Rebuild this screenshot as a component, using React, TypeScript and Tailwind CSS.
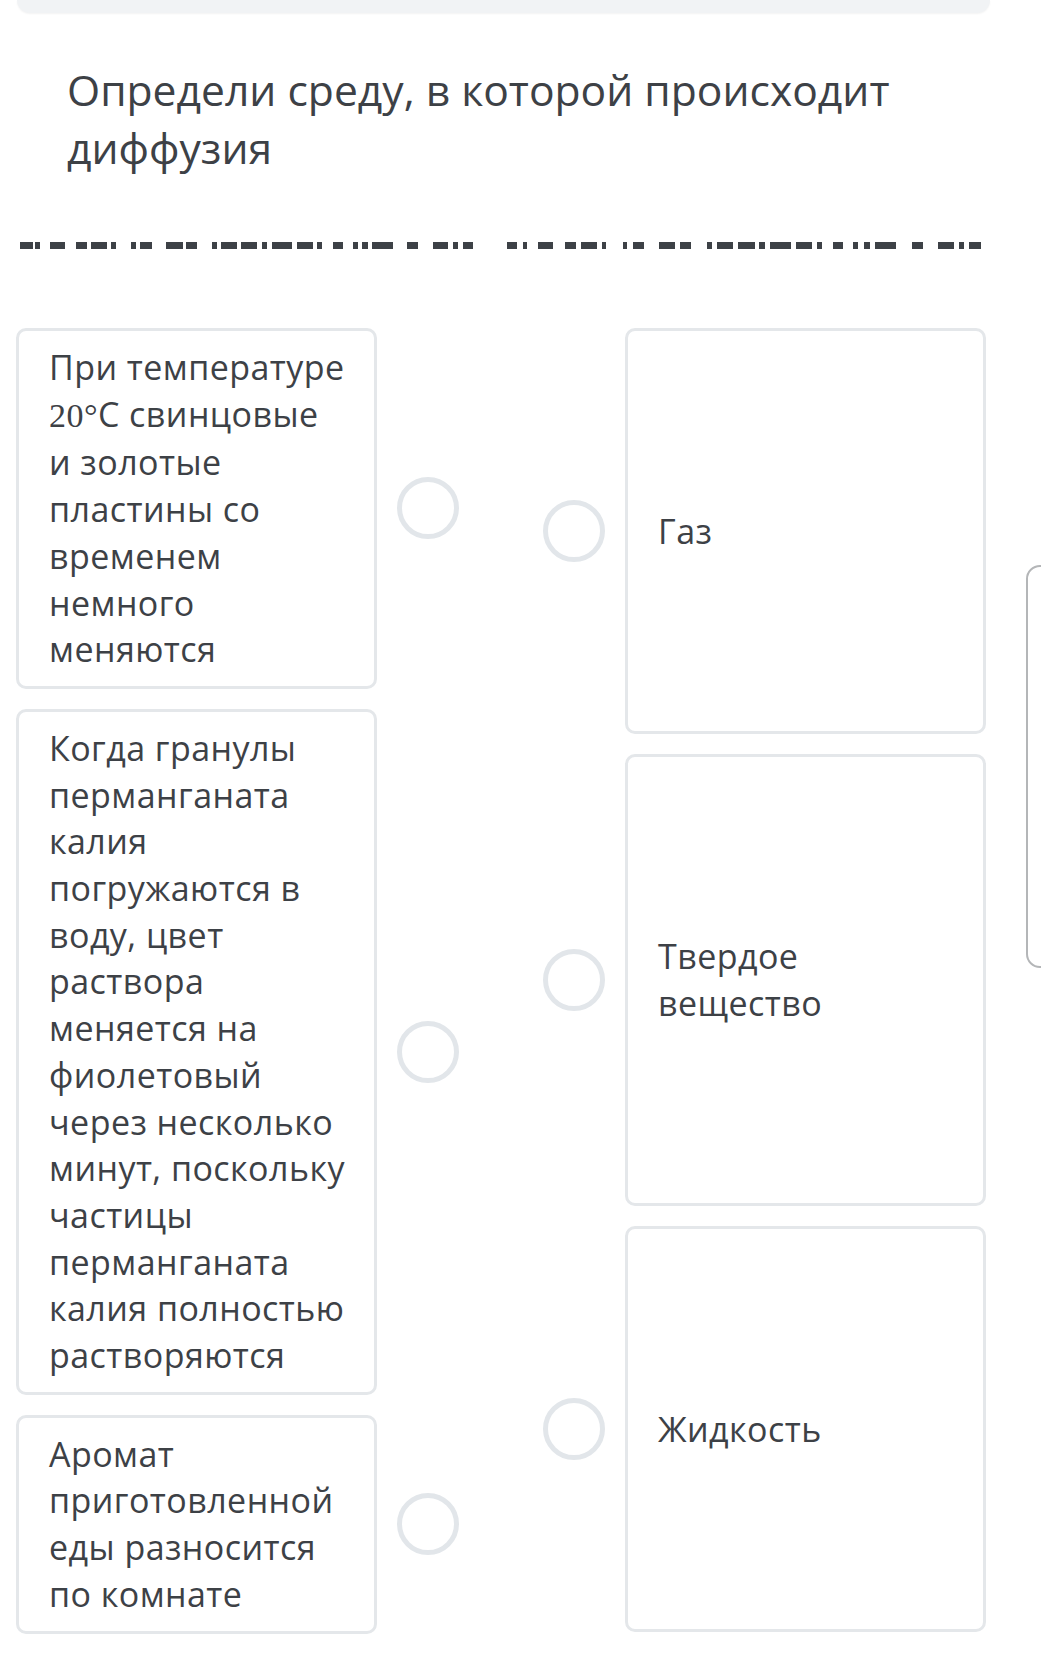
import React from 'react';

const font = { fontFamily: '"Open Sans", "Noto Sans", sans-serif' };

// underline glitch under the question: [start, end] pairs in px
const dashes: [number, number][] = [
  [20, 33], [35, 40], [50, 65], [76, 87], [91, 107], [111, 116], [131, 136], [140, 152],
  [166, 183], [186, 197], [212, 217], [221, 237], [241, 257], [262, 267], [272, 292],
  [297, 313], [317, 322], [333, 343], [353, 358], [362, 368], [372, 393], [407, 418],
  [433, 448], [453, 458], [463, 473],
  [507, 517], [523, 527], [538, 553], [565, 576], [581, 597], [602, 606], [623, 627],
  [633, 644], [659, 675], [680, 691], [707, 712], [717, 733], [738, 755], [759, 765],
  [770, 791], [796, 812], [817, 822], [833, 843], [853, 858], [864, 870], [875, 896],
  [912, 923], [938, 954], [959, 964], [969, 981],
];

const Radio = () => (
  <div className="w-[62px] h-[62px] shrink-0 rounded-full border-[5px] border-[#e2e6ea] bg-white" />
);

interface CardProps {
  lines: React.ReactNode[];
}

const LeftCard: React.FC<CardProps> = ({ lines }) => (
  <div className="w-[361px] shrink-0 rounded-[10px] border-[3px] border-[#e4e7ea] bg-white px-[30px] py-[13px] text-[34px] tracking-[0.45px] leading-[46.7px] text-[#3d4146]">
    {lines.map((l, i) => (
      <div key={i} className="whitespace-nowrap">{l}</div>
    ))}
  </div>
);

const RightCard: React.FC<CardProps & { h: string }> = ({ lines, h }) => (
  <div className={`w-[361px] shrink-0 flex flex-col justify-center rounded-[10px] border-[3px] border-[#e4e7ea] bg-white px-[30px] text-[34px] tracking-[0.45px] leading-[46.7px] text-[#3d4146] ${h}`}>
    {lines.map((l, i) => (
      <div key={i} className="whitespace-nowrap">{l}</div>
    ))}
  </div>
);

const leftItems: React.ReactNode[][] = [
  [
    'При температуре',
    <>
      <span style={{ fontFamily: '"Liberation Serif", "DejaVu Serif", serif' }}>20°</span>C свинцовые
    </>,
    'и золотые',
    'пластины со',
    'временем',
    'немного',
    'меняются',
  ],
  [
    'Когда гранулы',
    'перманганата',
    'калия',
    'погружаются в',
    'воду, цвет',
    'раствора',
    'меняется на',
    'фиолетовый',
    'через несколько',
    'минут, поскольку',
    'частицы',
    'перманганата',
    'калия полностью',
    'растворяются',
  ],
  ['Аромат', 'приготовленной', 'еды разносится', 'по комнате'],
];

export default function App() {
  return (
    <div className="relative w-[1041px] min-h-[1669px] bg-white overflow-hidden" style={font}>
      <div className="ml-[17px] w-[973px] h-[13px] rounded-b-[14px] bg-[#f1f3f5] shadow-[0_1px_2px_rgba(0,0,0,0.05)]" />

      <h1 className="mt-[47px] ml-[67px] w-[880px] text-[42.6px] leading-[58px] font-normal text-[#3d4146]">
        Определи среду, в которой происходит диффузия
      </h1>

      <svg className="block mt-[66px]" width="1041" height="7" viewBox="0 0 1041 7">
        {dashes.map(([a, b]) => (
          <rect key={a} x={a} y={0} width={b - a} height={7} fill="#3d4146" />
        ))}
      </svg>

      <div className="mt-[79px] ml-[16px] flex gap-[84px]">
        <div className="flex flex-col gap-[20px]">
          {leftItems.map((lines, i) => (
            <div key={i} className="flex items-center gap-[20px]">
              <LeftCard lines={lines} />
              <Radio />
            </div>
          ))}
        </div>
        <div className="flex flex-col gap-[20px]">
          <div className="flex items-center gap-[20px]">
            <Radio />
            <RightCard lines={['Газ']} h="h-[406px]" />
          </div>
          <div className="flex items-center gap-[20px]">
            <Radio />
            <RightCard lines={['Твердое', 'вещество']} h="h-[452px]" />
          </div>
          <div className="flex items-center gap-[20px]">
            <Radio />
            <RightCard lines={['Жидкость']} h="h-[406px]" />
          </div>
        </div>
      </div>

      {/* side handle peeking from the right edge */}
      <div className="absolute left-[1026px] top-[565px] w-[40px] h-[403px] rounded-[14px] border-2 border-[#b4b6b8]" />
    </div>
  );
}
